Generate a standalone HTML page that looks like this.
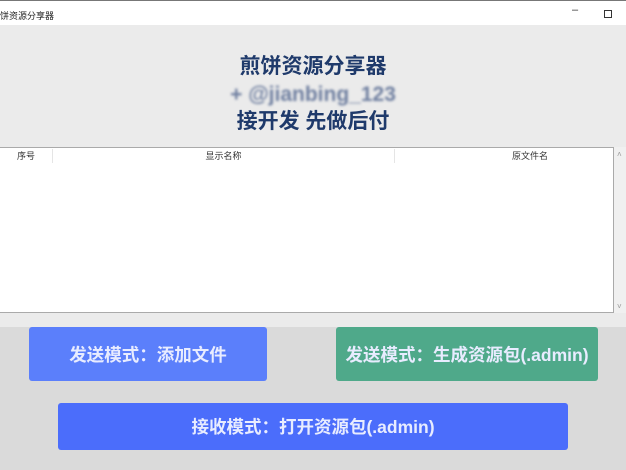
<html><head><style>
body{margin:0;width:626px;height:470px;overflow:hidden;background:#dadada;font-family:"Liberation Sans","Noto Sans CJK SC",sans-serif;position:relative}
div{position:absolute;box-sizing:border-box}
.h{left:0;width:626px;text-align:center;color:#1f3a6b;font-weight:bold;font-size:21px;line-height:24px}
.b{color:#e8ecff;font-weight:bold;font-size:17.5px;display:flex;align-items:center;justify-content:center;border-radius:3px;white-space:nowrap}
.th{top:149px;font-size:9px;color:#333;line-height:14px;text-align:center}
</style></head><body>
<div style="left:0;top:0;width:626px;height:25px;background:#fff;border-top:1px solid #777"></div>
<div style="left:0;top:9px;font-size:9px;color:#222">饼资源分享器</div>
<div style="left:572px;top:4px;font-size:11px;color:#333">–</div>
<div style="left:604px;top:10px;width:8px;height:8px;border:1px solid #333"></div>
<div style="left:0;top:25px;width:626px;height:302px;background:#ebebeb"></div>
<div class="h" style="top:55px">煎饼资源分享器</div>
<div class="h" style="top:83px;color:#6f7fa0;filter:blur(1.3px)">+ @jianbing_123</div>
<div class="h" style="top:110px">接开发 先做后付</div>
<div style="left:0;top:147px;width:614px;height:166px;background:#fff;border:1px solid #aaa;border-left:none"></div>
<div style="left:614px;top:147px;width:12px;height:166px;background:#f0f0f0"></div>
<div style="left:617px;top:150px;font-size:8px;color:#999">˄</div>
<div style="left:617px;top:302px;font-size:8px;color:#999">˅</div>
<div class="th" style="left:0;width:53px;border-right:1px solid #e5e5e5">序号</div>
<div class="th" style="left:53px;width:342px;border-right:1px solid #e5e5e5">显示名称</div>
<div class="th" style="left:395px;width:270px">原文件名</div>
<div class="b" style="left:29px;top:327px;width:238px;height:54px;background:#5b7ffb">发送模式：添加文件</div>
<div class="b" style="left:336px;top:327px;width:262px;height:54px;background:#4fa98a">发送模式：生成资源包(.admin)</div>
<div class="b" style="left:58px;top:403px;width:510px;height:47px;background:#4b6dfb">接收模式：打开资源包(.admin)</div>
</body></html>
